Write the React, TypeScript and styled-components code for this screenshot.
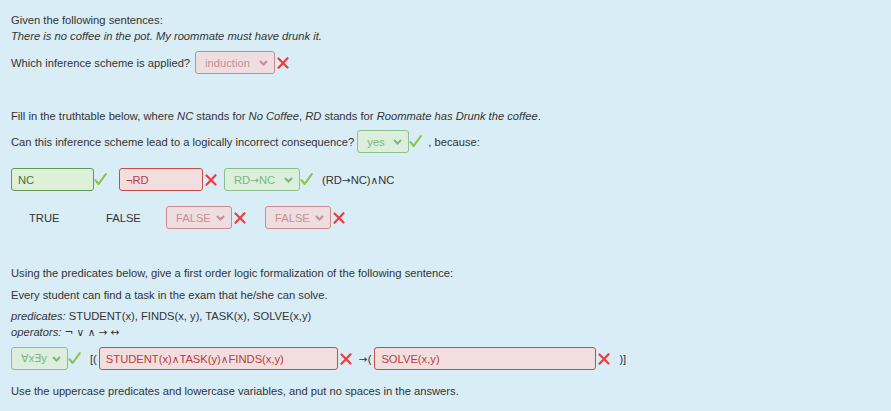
import React from "react";
import styled, { createGlobalStyle } from "styled-components";

type Verdict = "ok" | "bad";

const GlobalStyle = createGlobalStyle`
  html, body {
    margin: 0;
    background: #d9edf7;
  }
  body {
    font-family: "Liberation Sans", Arial, "DejaVu Sans", sans-serif;
    font-size: 11.2px;
    color: #333;
  }
`;

// kleuren per antwoord
const inputColors = {
  ok: { bg: "#dff0d8", border: "#5a9a55", text: "#3c763d" },
  bad: { bg: "#f2dede", border: "#c44e4c", text: "#b2403e" },
};

const selectColors = {
  ok: { bg: "#dcefdc", border: "#8cc08c", text: "#7fb47f" },
  bad: { bg: "#eedee2", border: "#cd8a8c", text: "#cc8d90" },
};

function App() {
  return (
    <Page>
      <GlobalStyle />
      <Line>Given the following sentences:</Line>
      <Line $italic>There is no coffee in the pot. My roommate must have drunk it.</Line>
      <Row $mt={7}>
        Which inference scheme is applied?
        <Select $state="bad" $w={80} $ml={5}>
          induction
        </Select>
        <Cross />
      </Row>

      <Line $mt={34}>
        Fill in the truthtable below, where <i>NC</i> stands for <i>No Coffee</i>,{" "}
        <i>RD</i> stands for <i>Roommate has Drunk the coffee</i>.
      </Line>
      <Row $mt={6}>
        Can this inference scheme lead to a logically incorrect consequence?
        <Select $state="ok" $w={52} $ml={3}>
          yes
        </Select>
        <Check />
        <Text $ml={6}>, because:</Text>
      </Row>

      <Row $mt={15}>
        <Input $state="ok" $w={83}>NC</Input>
        <Check />
        <Input $state="bad" $w={84} $ml={12}>
          ¬RD
        </Input>
        <Cross />
        <Select $state="ok" $w={76} $ml={7}>
          RD<Sym>→</Sym>NC
        </Select>
        <Check />
        <Text $ml={9}>
          (RD<Sym>→</Sym>NC)<Sym>∧</Sym>NC
        </Text>
      </Row>
      <Row $mt={15}>
        <Cell $w={95} $pl={18}>TRUE</Cell>
        <Cell $w={60}>FALSE</Cell>
        <Select $state="bad" $w={66}>
          FALSE
        </Select>
        <Cross />
        <Select $state="bad" $w={66} $ml={19}>
          FALSE
        </Select>
        <Cross />
      </Row>

      <Line $mt={36}>
        Using the predicates below, give a first order logic formalization of the following sentence:
      </Line>
      <Line $mt={6}>Every student can find a task in the exam that he/she can solve.</Line>
      <Line $mt={5}>
        <i>predicates:</i> STUDENT(x), FINDS(x, y), TASK(x), SOLVE(x,y)
      </Line>
      <Line>
        <i>operators:</i> <Sym>¬ ∨ ∧ → ↔</Sym>
      </Line>
      <Row $mt={7}>
        <Select $state="ok" $w={57}>
          ∀x∃y
        </Select>
        <Check />
        <Text $ml={9}>[(</Text>
        <Input $state="bad" $w={239} $ml={2}>
          STUDENT(x)<Sym>∧</Sym>TASK(y)<Sym>∧</Sym>FINDS(x,y)
        </Input>
        <Cross />
        <Text $ml={7}>
          <Sym>→</Sym>(
        </Text>
        <Input $state="bad" $w={222} $ml={3}>
          SOLVE(x,y)
        </Input>
        <Cross />
        <Text $ml={9}>)]</Text>
      </Row>
      <Line $mt={13}>
        Use the uppercase predicates and lowercase variables, and put no spaces in the answers.
      </Line>
    </Page>
  );
}

function Select({
  $state,
  $w,
  $ml = 0,
  children,
}: {
  $state: Verdict;
  $w: number;
  $ml?: number;
  children: React.ReactNode;
}) {
  return (
    <SelectBox $state={$state} $w={$w} $ml={$ml}>
      <span>{children}</span>
      <svg width="9" height="6" viewBox="0 0 9 6">
        <polyline
          points="1,1 4.5,4.5 8,1"
          fill="none"
          stroke={selectColors[$state].text}
          strokeWidth="2"
        />
      </svg>
    </SelectBox>
  );
}

function Check() {
  return (
    <Mark width="13" height="13" viewBox="0 0 13 13">
      <path
        d="M1.5 7.2 L4.6 11 L11.8 1.2"
        fill="none"
        stroke="#8cc540"
        strokeWidth="2.1"
        strokeLinecap="round"
        strokeLinejoin="round"
      />
    </Mark>
  );
}

function Cross() {
  return (
    <Mark $ml={2} width="12" height="12" viewBox="0 0 12 12">
      <path
        d="M1.5 1.5 L10.5 10.5 M10.5 1.2 L1.5 10.8"
        fill="none"
        stroke="#f23c3c"
        strokeWidth="2.2"
        strokeLinecap="round"
      />
    </Mark>
  );
}

const Page = styled.div`
  padding: 12px 11px 0;
  min-height: 411px;
  box-sizing: border-box;
`;

const Line = styled.div<{ $mt?: number; $italic?: boolean }>`
  line-height: 16px;
  margin-top: ${(p) => p.$mt ?? 0}px;
  font-style: ${(p) => (p.$italic ? "italic" : "normal")};
  white-space: nowrap;
`;

const Row = styled.div<{ $mt?: number }>`
  display: flex;
  align-items: center;
  height: 23px;
  margin-top: ${(p) => p.$mt ?? 0}px;
  white-space: nowrap;
`;

const Text = styled.span<{ $ml?: number }>`
  margin-left: ${(p) => p.$ml ?? 0}px;
`;

// pijlen en logische tekens uit DejaVu, Liberation heeft ze te klein
const Sym = styled.span`
  font-family: "DejaVu Sans", sans-serif;
  font-style: normal;
  font-size: 10.5px;
`;

const Cell = styled.span<{ $w: number; $pl?: number }>`
  width: ${(p) => p.$w}px;
  padding-left: ${(p) => p.$pl ?? 0}px;
  box-sizing: border-box;
`;

const Input = styled.div<{ $state: Verdict; $w: number; $ml?: number }>`
  display: flex;
  align-items: center;
  box-sizing: border-box;
  width: ${(p) => p.$w}px;
  height: 23px;
  margin-left: ${(p) => p.$ml ?? 0}px;
  padding-left: 6px;
  border: 1px solid ${(p) => inputColors[p.$state].border};
  border-radius: 3px;
  background: ${(p) => inputColors[p.$state].bg};
  color: ${(p) => inputColors[p.$state].text};
`;

const SelectBox = styled.div<{ $state: Verdict; $w: number; $ml: number }>`
  display: flex;
  align-items: center;
  justify-content: space-between;
  box-sizing: border-box;
  width: ${(p) => p.$w}px;
  height: 23px;
  margin-left: ${(p) => p.$ml}px;
  padding: 0 6px 0 9px;
  border: 1px solid ${(p) => selectColors[p.$state].border};
  border-radius: 3px;
  background: ${(p) => selectColors[p.$state].bg};
  color: ${(p) => selectColors[p.$state].text};
`;

const Mark = styled.svg<{ $ml?: number }>`
  flex: none;
  margin-left: ${(p) => p.$ml ?? 0}px;
`;

export default App;
